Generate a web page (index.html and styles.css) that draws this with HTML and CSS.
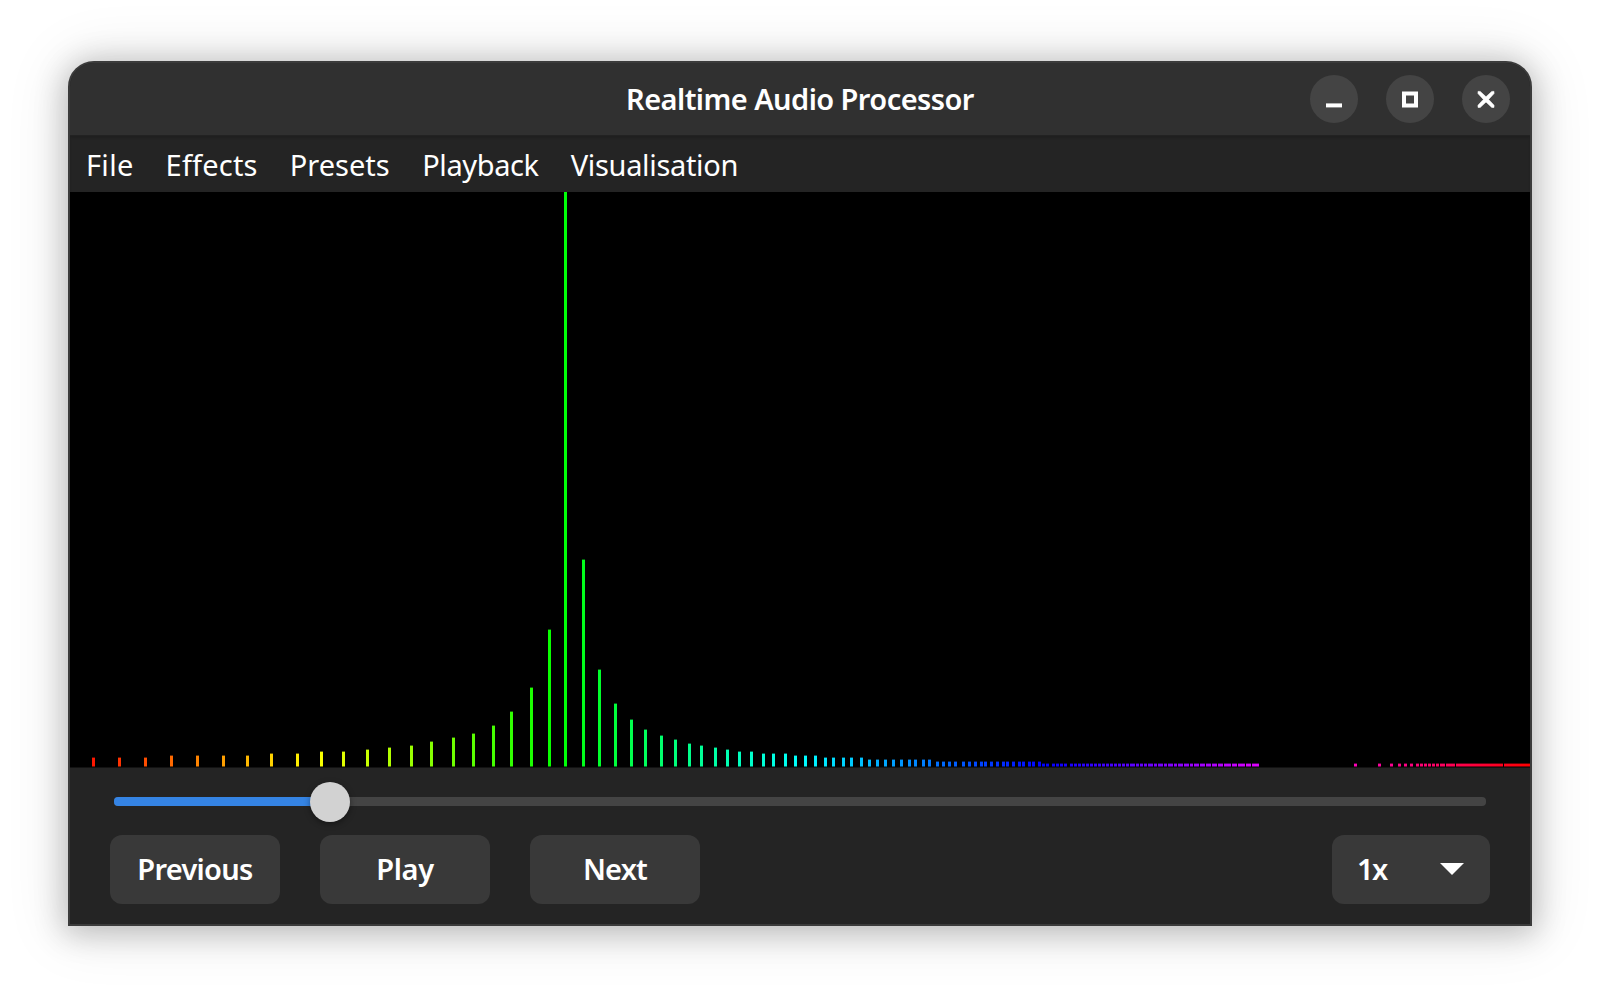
FILE: index.html
```html
<!DOCTYPE html>
<html lang="en">
<head>
<meta charset="utf-8">
<title>Realtime Audio Processor</title>
<link rel="stylesheet" href="styles.css">
</head>
<body>
<main class="window">
  <header class="titlebar">
    <h1 class="title">Realtime Audio Processor</h1>
    <div class="window-buttons">
      <button class="round" aria-label="Minimise"><svg viewBox="0 0 48 48"><path d="M16 28.400h16v4H16z" fill="#fff"/></svg></button>
      <button class="round" aria-label="Maximise"><svg viewBox="0 0 48 48"><path d="M18 18.400h12v12H18z" fill="none" stroke="#fff" stroke-width="4"/></svg></button>
      <button class="round" aria-label="Close"><svg viewBox="0 0 48 48"><path d="M16 16.400h2.200L24 21.800l5.800-5.400H32v2.200L26.600 24.400l5.400 5.800v2.200h-2.200L24 27 18.200 32.400H16v-2.200l5.400-5.800L16 18.600z" fill="#fff" stroke="#fff" stroke-width=".6"/></svg></button>
    </div>
  </header>
  <nav class="menubar">
    <span class="menu-file">File</span><span class="menu-effects">Effects</span><span class="menu-presets">Presets</span><span class="menu-playback">Playback</span><span class="menu-visualisation">Visualisation</span>
  </nav>
  <svg class="spectrum" id="spectrum" viewBox="70 192 1460 575"></svg>
  <section class="controls">
    <div class="slider"><div class="fill"></div><div class="knob"></div></div>
    <div class="buttons">
      <button class="btn previous">Previous</button>
      <button class="btn play">Play</button>
      <button class="btn next">Next</button>
      <button class="btn select"><span class="speed">1x</span><svg class="arrow" viewBox="0 0 24 12"><path d="M0 0h24L12 12z" fill="#fff"/></svg></button>
    </div>
  </section>
</main>
<script src="spectrum.js"></script>
</body>
</html>
```
FILE: styles.css
```css
* { box-sizing: border-box; }
body { margin: 0; height: 1000px; padding: 61px 68px 0; overflow: hidden; background: #fff; font-family: "Noto Sans", sans-serif; color: #fff; }
.window { height: 865px; display: flex; flex-direction: column; border: 2px solid #3b3b3b; border-radius: 26px 26px 0 0; background: #242424; box-shadow: 0 4px 30px 4px rgba(0,0,0,.22), 0 2px 60px 8px rgba(0,0,0,.09); }
.titlebar { height: 73px; flex: none; display: grid; grid-template-columns: 1fr auto 1fr; align-items: center; background: #303030; border-radius: 24px 24px 0 0; border-bottom: 1px solid #222; }
.title { grid-column: 2; margin: 0; font-size: 29px; line-height: 40px; font-weight: 600; letter-spacing: -.56px; }
.window-buttons { grid-column: 3; justify-self: end; display: flex; gap: 28px; padding-right: 20px; }
button { border: 0; padding: 0; color: inherit; font: inherit; }
.round { width: 48px; height: 48px; border-radius: 50%; background: #444; }
.round svg { display: block; width: 48px; height: 48px; }
.menubar { height: 56px; flex: none; display: flex; align-items: center; gap: 33px; padding: 2px 0 0 16px; font-size: 29px; line-height: 40px; box-shadow: inset 0 2px 2px #202020; }
.menu-file { letter-spacing: .3px; margin-right: -1px; }
.menu-effects { letter-spacing: .2px; margin-right: -.9px; }
.menu-presets { margin-right: -.5px; }
.menu-playback { letter-spacing: -.4px; margin-right: -.9px; }
.menu-visualisation { letter-spacing: -.32px; }
.spectrum { display: block; flex: none; width: 1460px; height: 575px; background: #000; }
.controls { flex: 1; padding: 29px 40px 0; border-top: 1px solid #121212; }
.slider { display: flex; align-items: center; height: 9px; margin: 0 4px; border-radius: 4px; background: #444; }
.fill { width: 200px; height: 9px; border-radius: 4px 0 0 4px; background: #3584e4; }
.knob { flex: none; width: 40px; height: 40px; margin-left: -4px; border-radius: 50%; background: #d2d2d2; box-shadow: 0 2px 6px rgba(0,0,0,.4); }
.buttons { display: flex; gap: 40px; margin-top: 29px; }
.btn { display: flex; align-items: center; justify-content: center; width: 170px; height: 69px; padding-bottom: 1px; border-radius: 12px; background: #393939; font-size: 29px; line-height: 40px; font-weight: 600; }
.previous { letter-spacing: -.7px; }
.play { letter-spacing: -.4px; }
.next { letter-spacing: -.8px; }
.select { width: 158px; margin-left: auto; justify-content: space-between; padding: 0 26px 1px 25px; }
.speed { letter-spacing: -1.5px; }
.arrow { width: 24px; height: 12px; }
```
FILE: spectrum.js
```js
// Each entry: [left edge, top edge, width] of one frequency line; width defaults to 3.
const lines = [
  [92,757],[118,757],[144,757],[170,755],[196,755],[222,755],[246,755],[270,753],[296,753],[320,751],[342,751],[366,749],[388,747],
  [410,745],[430,741],[452,737],[472,733],[492,725],[510,711],[530,687],[548,629],[564,191],[582,559],[598,669],[614,703],[630,719],
  [644,729],[660,735],[674,739],[688,743],[700,745],[714,747],[726,749],[738,751],[750,751],[762,753],[772,753],[784,753],
  [794,755],[804,755],[814,755],
  [1130,763,5],[1136,763],[1140,763],[1144,763],[1148,763,5],[1154,763],[1158,763,5],[1164,763],[1168,763,5],[1174,763],
  [1178,763,5],[1184,763,5],[1190,763],[1194,763,5],[1200,763,5],[1206,763,5],[1212,763,5],[1218,763,5],[1224,763,7],
  [1232,763,5],[1238,763,7],[1246,763,5],[1252,763,7],[1440,763,5]
];
const levels = {
  757: [824,832,842,850,860],
  759: [868,876,884,892,900,908,914,922,928],
  761: [936,942,948,954,962,968,974,980,984,990,996,1002,1006,1012,1018,1022,1028,1032,1038],
  763: [1042,1046,1052,1056,1060,1064,1354,1378,1390,1398,1404,1410,1416,1420,1424,1428,1432,1436]
};
for (let x = 1070; x < 1130; x += 4) levels[763].push(x);
for (const top in levels) for (const x of levels[top]) lines.push([x, +top]);
// The highest frequencies sit so close together that they merge into solid runs.
for (let x = 1446; x < 1530; x += 2) {
  const last = x === 1454 || x === 1502;
  lines.push([x, 763, last ? 1 : 2]);
}

const svg = document.getElementById("spectrum");
for (const [x, top, width = 3] of lines) {
  const r = document.createElementNS("http://www.w3.org/2000/svg", "rect");
  r.setAttribute("x", x);
  r.setAttribute("y", top + 0.6);
  r.setAttribute("width", width);
  r.setAttribute("height", 766.5 - top - 0.6);
  r.setAttribute("fill", `hsl(${(x - 70) * 0.2466} 100% 50%)`);
  svg.appendChild(r);
}
```
